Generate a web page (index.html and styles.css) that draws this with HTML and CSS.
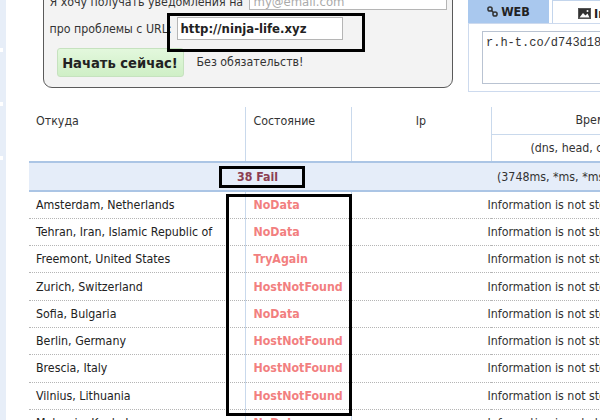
FILE: index.html
```html
<!DOCTYPE html>
<html lang="ru">
<head>
<meta charset="utf-8">
<title>Check</title>
<link rel="stylesheet" href="styles.css">
</head>
<body>
<div class="page">
  <div class="strip"><i></i><i></i><i></i></div>
  <div class="main">
    <div class="top">
      <div class="form-panel">
        <div class="row r1">
          <span class="label">Я хочу получать уведомления на</span>
          <span class="field email">my@email.com</span>
        </div>
        <div class="row r2">
          <span class="label lbl-url">про проблемы с URL:</span>
          <span class="field url">http://ninja-life.xyz</span>
        </div>
        <div class="row r3">
          <span class="btn">Начать сейчас!</span>
          <span class="note">Без обязательств!</span>
        </div>
      </div>
      <div class="share">
        <div class="tabs">
          <div class="tab active">
            <svg class="ico" width="11" height="11" viewBox="0 0 11 11"><circle cx="3" cy="3" r="2.1" fill="none" stroke="#333" stroke-width="1.5"/><circle cx="8" cy="8" r="2.1" fill="none" stroke="#333" stroke-width="1.5"/><line x1="4.3" y1="4.3" x2="6.7" y2="6.7" stroke="#333" stroke-width="1.5"/></svg>
            <span>WEB</span>
          </div>
          <div class="tab other">
            <svg class="ico" width="13" height="11" viewBox="0 0 13 11"><rect x="0.5" y="0.5" width="12" height="10" fill="#333" stroke="#555"/><path d="M1.5 9.5 L5 5 L7.5 7.5 L9.5 5.5 L11.5 9.5 Z" fill="#fff"/><circle cx="9.5" cy="3" r="1" fill="#fff"/></svg>
            <span>Image</span>
          </div>
        </div>
        <div class="share-box">
          <div class="textarea">r.h-t.co/d743d18a9f</div>
        </div>
      </div>
    </div>

    <table class="grid">
      <colgroup>
        <col class="w-from"><col class="w-state"><col class="w-ip"><col class="w-time">
      </colgroup>
      <thead>
        <tr class="h1">
          <th rowspan="2" class="c-from">Откуда</th>
          <th rowspan="2" class="c-state">Состояние</th>
          <th rowspan="2" class="c-ip">Ip</th>
          <th class="c-time">Время ответа</th>
        </tr>
        <tr class="h2">
          <th class="c-sub">(dns, head, connect, total)</th>
        </tr>
      </thead>
      <tbody>
        <tr class="fail">
          <td colspan="3" class="fail-count">38 Fail</td>
          <td class="fail-time">(3748ms, *ms, *ms, *ms)</td>
        </tr>
        <tr><td class="loc">Amsterdam, Netherlands</td><td class="st">NoData</td><td colspan="2" class="info">Information is not stored</td></tr>
        <tr><td class="loc">Tehran, Iran, Islamic Republic of</td><td class="st">NoData</td><td colspan="2" class="info">Information is not stored</td></tr>
        <tr><td class="loc">Freemont, United States</td><td class="st">TryAgain</td><td colspan="2" class="info">Information is not stored</td></tr>
        <tr><td class="loc">Zurich, Switzerland</td><td class="st">HostNotFound</td><td colspan="2" class="info">Information is not stored</td></tr>
        <tr><td class="loc">Sofia, Bulgaria</td><td class="st">NoData</td><td colspan="2" class="info">Information is not stored</td></tr>
        <tr><td class="loc">Berlin, Germany</td><td class="st">HostNotFound</td><td colspan="2" class="info">Information is not stored</td></tr>
        <tr><td class="loc">Brescia, Italy</td><td class="st">HostNotFound</td><td colspan="2" class="info">Information is not stored</td></tr>
        <tr><td class="loc">Vilnius, Lithuania</td><td class="st">HostNotFound</td><td colspan="2" class="info">Information is not stored</td></tr>
        <tr><td class="loc">Malaysia, Kuala Lumpur</td><td class="st">NoData</td><td colspan="2" class="info">Information is not stored</td></tr>
      </tbody>
    </table>
  </div>

  <div class="mark mark-url"></div>
  <div class="mark mark-fail"></div>
  <div class="mark mark-status"></div>
</div>
</body>
</html>
```

FILE: styles.css
```css
html, body {
  margin: 0;
  padding: 0;
}
body {
  width: 600px;
  height: 420px;
  overflow: hidden;
  background: #fff;
  font-family: "DejaVu Sans Condensed", "DejaVu Sans", sans-serif;
  font-stretch: condensed;
  font-size: 12.3px;
  color: #222;
}
.page {
  position: relative;
  display: flex;
  width: 600px;
  height: 420px;
  overflow: hidden;
}
.strip {
  flex: 0 0 6px;
  background: #e7eef8;
  display: flex;
  flex-direction: column;
  padding-top: 48px;
  gap: 50px;
}
.strip i {
  display: block;
  width: 3px;
  height: 4px;
  background: #fff;
}
.main {
  flex: 1;
  margin-left: 23px;
  min-width: 0;
}

/* top area */
.top {
  display: flex;
  align-items: flex-start;
  height: 92px;
}
.form-panel {
  box-sizing: border-box;
  width: 410px;
  margin-left: 14px;
  margin-top: -18px;
  padding: 4.5px 5.5px 8px 5.5px;
  border: 1.5px solid #5a5a5a;
  border-radius: 0 0 9px 9px;
  background: #f3f3f3;
  flex: 0 0 auto;
}
.row {
  display: flex;
  align-items: center;
  white-space: nowrap;
  color: #333;
}
.r1 { height: 28px; }
.r2 { height: 26px; }
.r3 { height: 33px; margin-top: 4px; }
.field {
  box-sizing: border-box;
  display: flex;
  align-items: center;
  background: #fff;
  border: 1px solid #b5b5b5;
}
.email {
  margin-left: auto;
  width: 198px;
  height: 16px;
  padding-left: 4px;
  color: #aaa;
  font-size: 13px;
}
.lbl-url { width: 127px; }
.url {
  width: 166px;
  height: 23px;
  padding-left: 3px;
  font-weight: bold;
  font-size: 13px;
  color: #222;
}
.btn {
  box-sizing: border-box;
  margin-left: 7px;
  width: 127px;
  height: 29px;
  display: flex;
  align-items: center;
  justify-content: center;
  border: 1px solid #c6e2bf;
  border-radius: 3px;
  background: linear-gradient(#e3f8dd, #cfefc6);
  font-weight: bold;
  font-size: 14.6px;
  color: #222;
}
.note {
  margin-left: 13px;
  color: #333;
}

.share {
  margin-left: 15px;
  width: 140px;
  flex: 0 0 auto;
}
.tabs {
  display: flex;
  height: 23px;
  gap: 3px;
}
.tab {
  box-sizing: border-box;
  height: 23px;
  display: flex;
  align-items: center;
  gap: 3px;
  font-weight: bold;
  font-size: 12.5px;
  color: #222;
  white-space: nowrap;
  flex: 0 0 auto;
}
.ico { flex: 0 0 auto; }
.tab.active {
  width: 81px;
  justify-content: center;
  background: #a9c8ee;
}
.tab.other {
  width: 90px;
  padding-left: 25px;
  padding-top: 2px;
  background: #fff;
  border: 1px solid #c3d5ec;
  border-bottom: none;
}
.share-box {
  box-sizing: border-box;
  height: 69px;
  border: 1px solid #cddaee;
  padding: 7px 0 0 13px;
  background: #fff;
}
.textarea {
  box-sizing: border-box;
  height: 53px;
  width: 140px;
  border: 1px solid #b9c3d2;
  padding: 4px 0 0 3px;
  font-family: "Liberation Mono", monospace;
  font-size: 12px;
  color: #333;
  white-space: nowrap;
  overflow: hidden;
}

/* table */
.grid {
  margin-top: 15px;
  border-collapse: collapse;
  table-layout: fixed;
  width: 680px;
  white-space: nowrap;
}
.w-from { width: 216px; }
.w-state { width: 106px; }
.w-ip { width: 140px; }
.w-time { width: 218px; }
.grid th {
  font-weight: normal;
  color: #333;
  text-align: left;
  padding: 0;
  overflow: hidden;
}
.h1 { height: 27px; }
.h2 { height: 28px; }
.c-from, .c-state, .c-ip {
  vertical-align: top;
  padding-top: 7px !important;
  border-right: 1px solid #c9d9ec;
}
.c-from { padding-left: 7px !important; }
.c-state { padding-left: 8px !important; }
.c-ip { text-align: center !important; }
.c-time {
  padding-left: 84px !important;
  border-bottom: 1px solid #c9d9ec;
}
.c-sub { padding-left: 39px !important; }

.fail {
  height: 29px;
  background: #e5edf9;
  border-top: 2px solid #abc5e5;
  border-bottom: 2px solid #abc5e5;
}
.fail td { padding: 0; }
.fail-count {
  padding-left: 208px !important;
  font-weight: bold;
  color: #8c3e52;
}
.fail-time { padding-left: 6px !important; color: #333; }

.grid tbody tr:not(.fail) {
  height: 27.3px;
}
.grid tbody td {
  border-bottom: 1px dotted #b5b5b5;
  padding: 0;
  overflow: hidden;
}
.loc {
  padding-left: 7px !important;
  border-right: 1px solid #c9d9ec;
  color: #222;
}
.st {
  padding-left: 8px !important;
  border-right: 1px solid #c9d9ec;
  font-weight: bold;
  color: #f27f7f;
}
.info {
  padding-left: 136px !important;
  color: #333;
}

/* annotation marks */
.mark {
  position: absolute;
  box-sizing: border-box;
  border: 3px solid #000;
}
.mark-url { left: 167px; top: 13px; width: 198px; height: 39px; }
.mark-fail { left: 219px; top: 166px; width: 86px; height: 22px; }
.mark-status { left: 226px; top: 194px; width: 126px; height: 222px; }
```
